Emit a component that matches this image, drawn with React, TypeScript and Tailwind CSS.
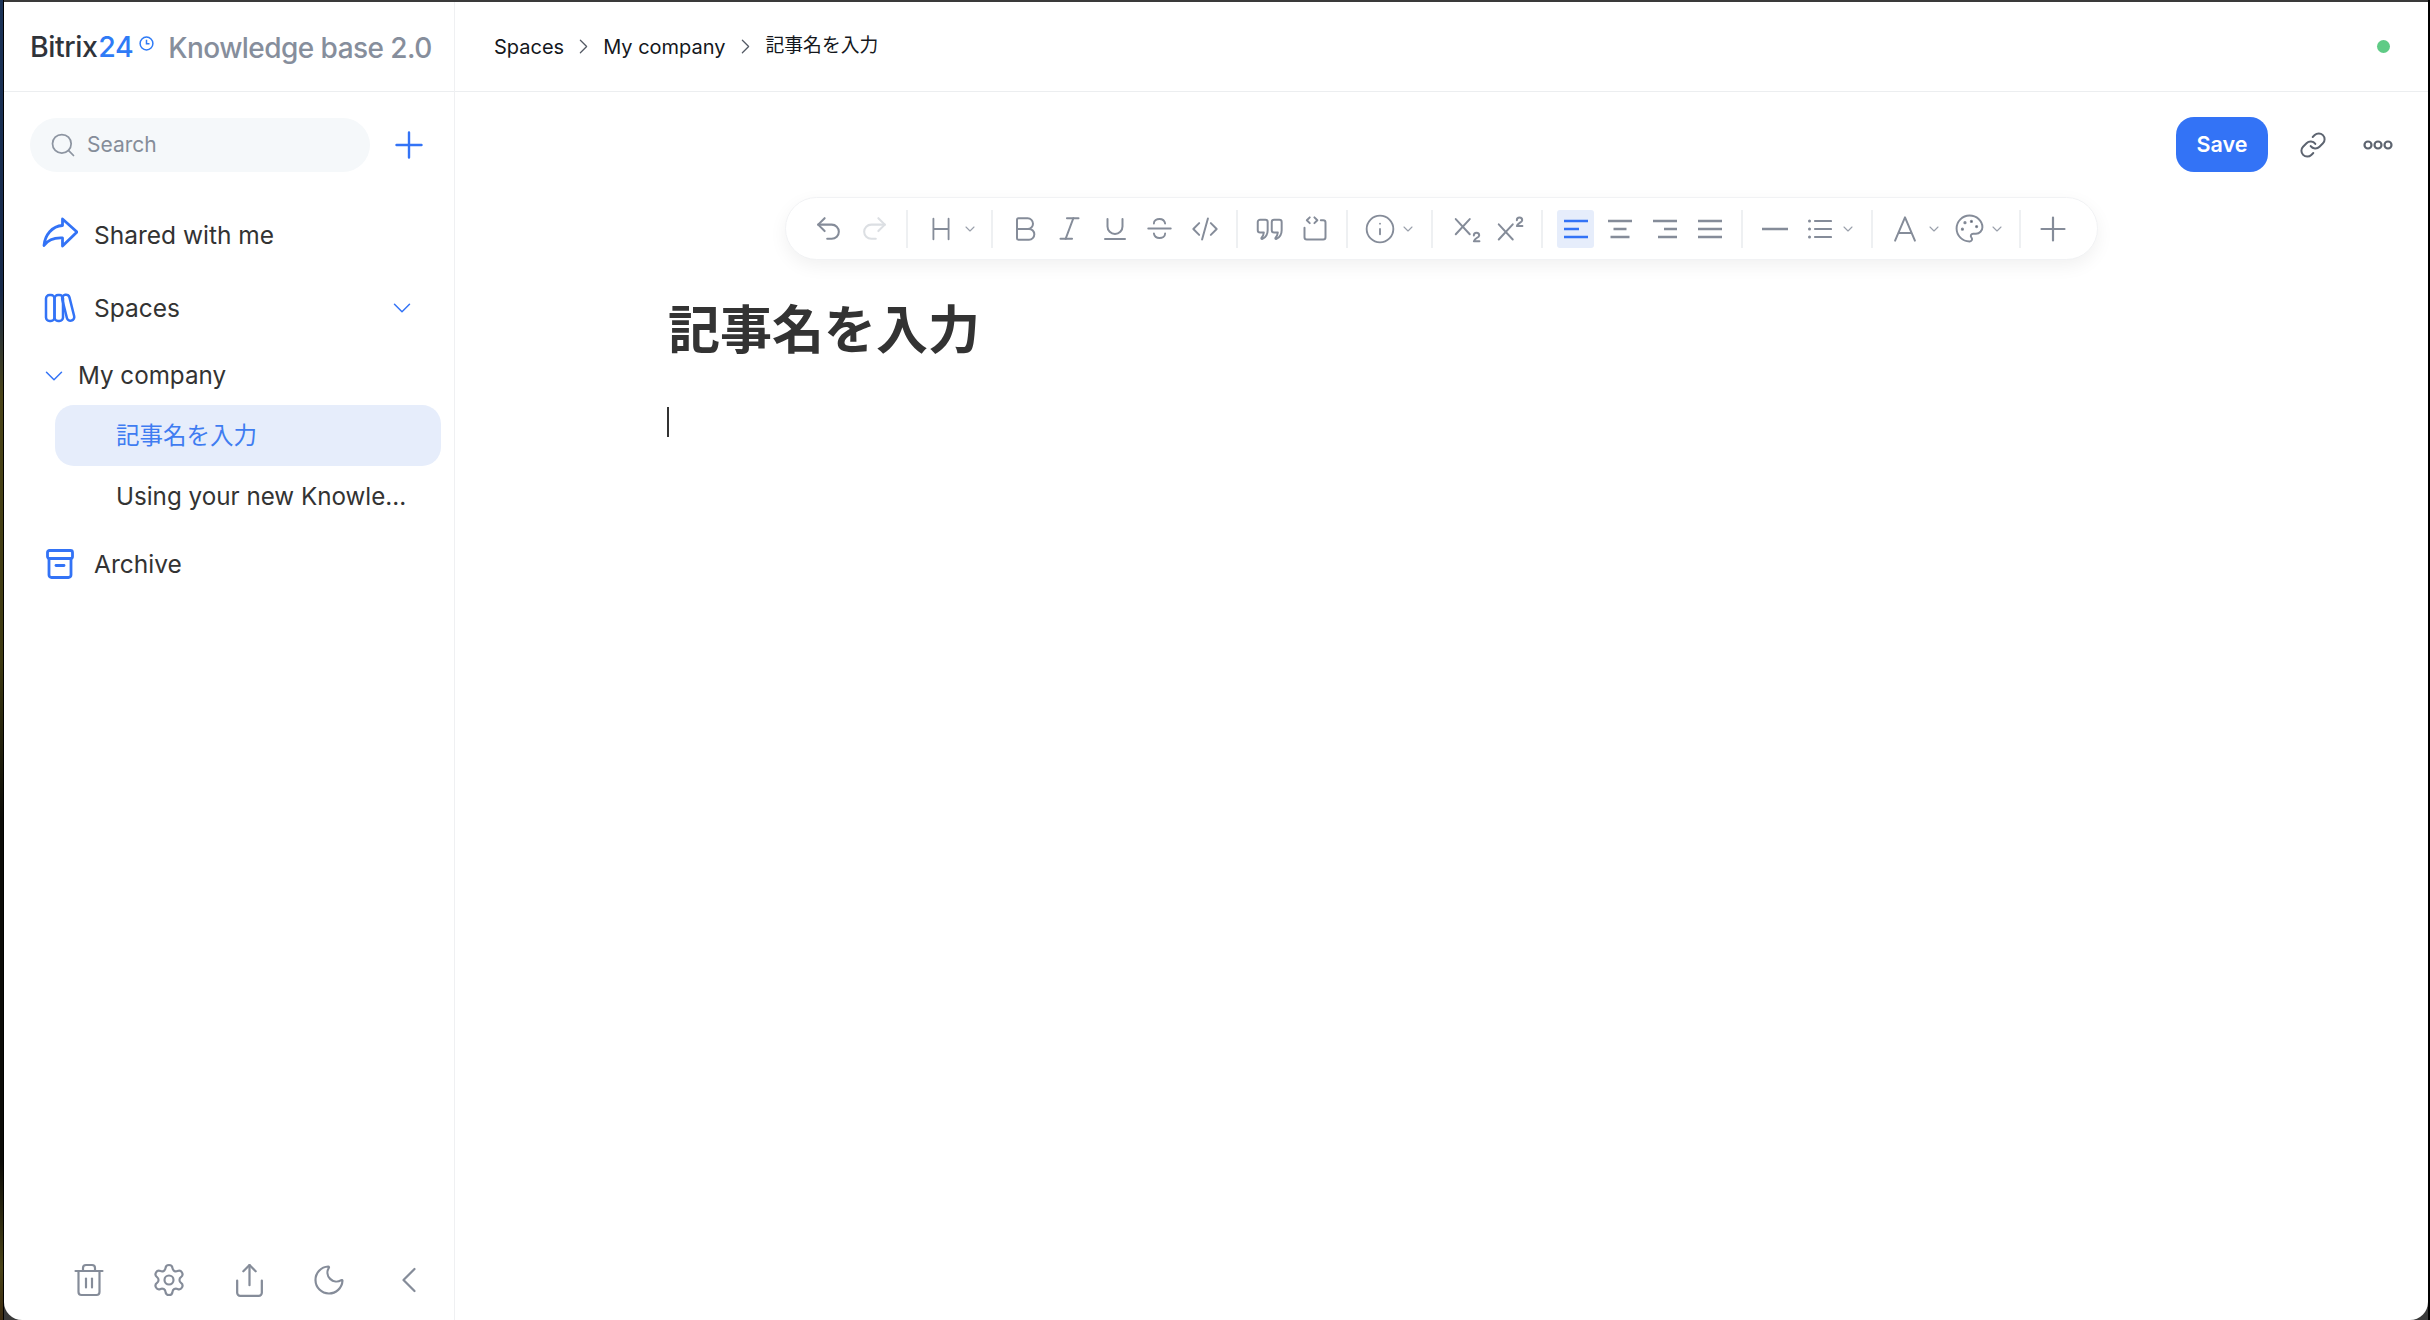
import React from "react";
import { Undo2, Redo2, Bold, Italic, Underline, Info, Palette, Link, Search, Trash2, Settings, Share, Moon, ChevronLeft, ChevronRight, ChevronDown } from "lucide-react";

const G = "#858c99";

function Svg({ size = 26, children }: { size?: number; children: React.ReactNode }) {
  return (
    <svg width={size} height={size} viewBox="0 0 24 24" fill="none" stroke={G} strokeWidth={1.7} strokeLinecap="round" strokeLinejoin="round">
      {children}
    </svg>
  );
}

function Btn({ w, children }: { w: string; children: React.ReactNode }) {
  return <div className={`${w} h-[38px] flex items-center justify-center shrink-0`}>{children}</div>;
}

function Sep() {
  return (
    <div className="w-[20px] h-[38px] flex justify-center shrink-0">
      <div className="w-[2px] h-full bg-[#eef0f2]" />
    </div>
  );
}

function Chev({ w }: { w: string }) {
  return (
    <div className={`${w} h-[38px] flex items-center shrink-0`}>
      <svg width="10" height="6" viewBox="0 0 10 6" fill="none" stroke="#9aa0ab" strokeWidth="1.1" strokeLinecap="round" strokeLinejoin="round">
        <path d="M1 1l4 4 4-4" />
      </svg>
    </div>
  );
}

function AlignIcon({ mid, bottom, color, align }: { mid: number; bottom: number; color: string; align: "l" | "c" | "r" }) {
  const line = (y: number, len: number) => {
    const x = align === "l" ? 0 : align === "r" ? 24 - len : (24 - len) / 2;
    return <line x1={x} x2={x + len} y1={y} y2={y} />;
  };
  return (
    <svg width="24" height="20" viewBox="0 0 24 20" fill="none" stroke={color} strokeWidth="2.4">
      {line(2, 24)}
      {line(10, mid)}
      {line(18, bottom)}
    </svg>
  );
}

function Toolbar() {
  return (
    <div className="flex items-center h-[63px] w-[1313px] pl-[19px] pr-[20px] rounded-[32px] bg-white border border-[#f1f2f4] shadow-[0_6px_18px_rgba(0,0,0,0.06)]">
      <Btn w="w-[47px]"><Undo2 size={31} color={G} strokeWidth={1.6} /></Btn>
      <Btn w="w-[45px]"><Redo2 size={31} color="#dcdfe3" strokeWidth={1.6} /></Btn>
      <Sep />
      <Btn w="w-[48px]">
        <Svg><path d="M5 2.500v19M19 2.500v19M5 12h14" /></Svg>
      </Btn>
      <Chev w="w-[17px]" />
      <Sep />
      <Btn w="w-[45px]"><Bold size={32} color={G} strokeWidth={1.5} /></Btn>
      <Btn w="w-[45px]"><Italic size={31} color={G} strokeWidth={1.5} /></Btn>
      <Btn w="w-[45px]"><Underline size={30} color={G} strokeWidth={1.6} /></Btn>
      <Btn w="w-[45px]">
        <Svg size={27}><path d="M2 12h20M17 7.500C16.500 5 14.500 3.500 12 3.500S7 5 7 7.500M7 16.500c.5 2.500 2.500 4 5 4s5-1.500 5-4" /></Svg>
      </Btn>
      <Btn w="w-[45px]">
        <Svg size={28}><path d="M7 7l-5 5 5 5M17 7l5 5-5 5M14.500 3l-5 18" /></Svg>
      </Btn>
      <Sep />
      <Btn w="w-[45px]">
        <Svg size={28}>
          <path d="M3.500 4h4.500a2 2 0 0 1 2 2v7c0 3.500-1.500 6-4.500 7.500-.8.300-1.200-.5-.7-1 1-1 1.700-2.500 1.900-4.500H3.500a2 2 0 0 1-2-2V6a2 2 0 0 1 2-2z" />
          <path d="M15.500 4h4.500a2 2 0 0 1 2 2v7c0 3.500-1.500 6-4.500 7.500-.8.300-1.200-.5-.7-1 1-1 1.700-2.500 1.900-4.500h-3.200a2 2 0 0 1-2-2V6a2 2 0 0 1 2-2z" />
        </Svg>
      </Btn>
      <Btn w="w-[45px]">
        <Svg size={28}>
          <path d="M3 11v8a2 2 0 0 0 2 2h14a2 2 0 0 0 2-2V6.500a2 2 0 0 0-2-2h-2" />
          <path d="M7.500 2 5 4.500 7.500 7M11.500 2 14 4.500 11.500 7" />
        </Svg>
      </Btn>
      <Sep />
      <Btn w="w-[46px]"><Info size={32} color={G} strokeWidth={1.4} /></Btn>
      <Chev w="w-[19px]" />
      <Sep />
      <div className="w-[3px] shrink-0" />
      <Btn w="w-[45px]">
        <Svg size={28}>
          <path d="M1.500 3.500l12 13M13.500 3.500l-12 13" />
          <path d="M17 17.500a2.300 2.300 0 0 1 4.600 0c0 1.800-4.600 2.800-4.600 5h4.800" />
        </Svg>
      </Btn>
      <Btn w="w-[42px]">
        <Svg size={28}>
          <path d="M1.500 8l12 13M13.500 8l-12 13" />
          <path d="M17 4.500a2.300 2.300 0 0 1 4.600 0c0 1.800-4.600 2.800-4.600 5h4.800" />
        </Svg>
      </Btn>
      <Sep />
      <div className="ml-[5px] mr-[3px] w-[37px] h-[38px] rounded-[3px] bg-[#e6edfb] flex items-center justify-center shrink-0">
        <AlignIcon mid={15} bottom={24} color="#3373f6" align="l" />
      </div>
      <Btn w="w-[45px]"><AlignIcon mid={13} bottom={19} color={G} align="c" /></Btn>
      <Btn w="w-[45px]"><AlignIcon mid={13} bottom={19} color={G} align="r" /></Btn>
      <Btn w="w-[45px]"><AlignIcon mid={24} bottom={24} color={G} align="l" /></Btn>
      <Sep />
      <Btn w="w-[45px]">
        <svg width="26" height="4" viewBox="0 0 26 4" stroke={G} strokeWidth="2.4"><line x1="0" x2="26" y1="2" y2="2" /></svg>
      </Btn>
      <Btn w="w-[46px]">
        <svg width="24" height="20" viewBox="0 0 24 20" fill="none" stroke={G} strokeWidth="2.200" strokeLinecap="round">
          <path d="M7 2h16M7 10h16M7 18h16" />
          <path d="M1.500 2h.01M1.500 10h.01M1.500 18h.01" strokeWidth="3" />
        </svg>
      </Btn>
      <Chev w="w-[19px]" />
      <Sep />
      <Btn w="w-[46px]">
        <Svg size={28}><path d="M3.500 22 12 2l8.500 20M6.500 15.500h11" /></Svg>
      </Btn>
      <Chev w="w-[19px] pl-px" />
      <Btn w="w-[44px]"><Palette size={31} color={G} strokeWidth={1.5} /></Btn>
      <Chev w="w-[19px] pl-px" />
      <Sep />
      <Btn w="w-[46px]">
        <svg width="26" height="26" viewBox="0 0 26 26" fill="none" stroke={G} strokeWidth="2.200" strokeLinecap="round">
          <path d="M13 1.500v23M1.500 13h23" />
        </svg>
      </Btn>
    </div>
  );
}

function NavRow({ h, mt, icon, label, trail }: { h: string; mt: string; icon: React.ReactNode; label: string; trail?: React.ReactNode }) {
  return (
    <div className={`flex items-center ${h} ${mt}`}>
      <div className="w-[64px] shrink-0 flex items-center">{icon}</div>
      <span className="text-[24.5px] text-[#333] leading-none">{label}</span>
      {trail}
    </div>
  );
}

function Sidebar() {
  return (
    <aside className="w-[451px] shrink-0 h-full flex flex-col border-r border-[#eff0f2]">
      <div className="h-[90px] border-b border-[#eceef0] flex items-center pl-[26px] pt-[2px] shrink-0">
        <span className="text-[28.5px] text-[#2f333a] font-medium tracking-[-0.45px]">Bitrix</span>
        <span className="text-[28.5px] text-[#2f7bf6] font-medium tracking-[-0.45px] ml-px">24</span>
        <svg className="ml-[6px] mb-[9px]" width="15" height="15" viewBox="0 0 15 15" fill="none" stroke="#2f7bf6" strokeWidth="1.500">
          <circle cx="7.500" cy="7.500" r="6.400" />
          <path d="M7.500 3.800v4h3" />
        </svg>
        <span className="ml-[14px] text-[28px] text-[#868e9c] font-medium tracking-[-0.55px] whitespace-nowrap">Knowledge base 2.0</span>
      </div>
      <div className="flex-1 flex flex-col pl-[26px] pr-[13px] pt-[26px]">
        <div className="flex items-center">
          <div className="w-[340px] h-[54px] rounded-[27px] bg-[#f5f8fa] flex items-center pl-[19px]">
            <Search size={28} color="#8d95a1" strokeWidth={1.5} />
            <span className="ml-[10px] text-[21px] text-[#858d99]">Search</span>
          </div>
          <div className="ml-[25px]">
            <svg width="28" height="28" viewBox="0 0 28 28" fill="none" stroke="#3373f6" strokeWidth="2.400" strokeLinecap="round">
              <path d="M14 1.500v25M1.500 14h25" />
            </svg>
          </div>
        </div>
        <NavRow
          h="h-[54px]"
          mt="mt-[36px]"
          label="Shared with me"
          icon={
            <svg className="ml-[10px] -translate-y-[3px]" width="38" height="32" viewBox="0 0 38 32" fill="none" stroke="#3373f6" strokeWidth="2.800" strokeLinejoin="round" strokeLinecap="round">
              <path d="M22.500 3 L37 16 L22.500 30 L22.500 22 C14 21.500 8 24 4 29.500 C5 19 12 10 22.500 9.500 Z" />
            </svg>
          }
        />
        <NavRow
          h="h-[54px]"
          mt="mt-[19px]"
          label="Spaces"
          icon={
            <svg className="ml-[14px]" width="34" height="30" viewBox="0 0 34 30" fill="none" stroke="#3373f6" strokeWidth="2.500">
              <rect x="2" y="2" width="8.500" height="26" rx="3.500" />
              <rect x="10.500" y="2" width="8.500" height="26" rx="3.500" />
              <rect x="20.500" y="1.500" width="7.500" height="26.500" rx="3.500" transform="rotate(-14 24 15)" />
            </svg>
          }
          trail={
            <div className="ml-auto mr-[24px]">
              <ChevronDown size={30} color="#3373f6" strokeWidth={1.2} />
            </div>
          }
        />
        <div className="flex items-center h-[50px] mt-[16px] pl-[9px]">
          <ChevronDown size={30} color="#3373f6" strokeWidth={1.2} />
          <span className="ml-[9px] text-[24.2px] text-[#333] leading-none">My company</span>
        </div>
        <div className="ml-[25px] mt-[4px] h-[61px] rounded-[19px] bg-[#e6edfb] flex items-center pl-[61px] text-[23.5px] text-[#3f7cf1]">
          記事名を入力
        </div>
        <div className="ml-[86px] h-[60px] mt-px flex items-center text-[24.2px] text-[#333] whitespace-nowrap">Using your new Knowle...</div>
        <NavRow
          h="h-[54px]"
          mt="mt-[10px]"
          label="Archive"
          icon={
            <svg className="ml-[16px]" width="28" height="30" viewBox="0 0 28 30" fill="none" stroke="#3373f6" strokeWidth="2.800" strokeLinejoin="round" strokeLinecap="round">
              <rect x="1.500" y="1.500" width="25" height="8" rx="2" />
              <path d="M3 9.500V26a2.500 2.500 0 0 0 2.500 2.500h17A2.500 2.500 0 0 0 25 26V9.500" />
              <path d="M10 16.500h8" />
            </svg>
          }
        />
        <div className="mt-auto pb-[20px] flex items-center ml-[19px]">
          {[
            <Trash2 size={36} color={G} strokeWidth={1.45} />,
            <Settings size={36} color={G} strokeWidth={1.45} />,
            <Share size={37} color={G} strokeWidth={1.45} />,
            <Moon size={36} color={G} strokeWidth={1.45} />,
            <ChevronLeft size={44} color={G} strokeWidth={1.2} />,
          ].map((ic, i) => (
            <div key={i} className="w-[80px] h-[40px] shrink-0 flex items-center justify-center">{ic}</div>
          ))}
        </div>
      </div>
    </aside>
  );
}

function Main() {
  return (
    <main className="flex-1 min-w-0 h-full flex flex-col">
      <header className="h-[90px] border-b border-[#eceef0] flex items-center pl-[39px] pr-[38px] shrink-0 text-[20px] text-[#14171c]">
        <span>Spaces</span>
        <ChevronRight size={25} color="#555b66" strokeWidth={1.2} className="mx-[7px]" />
        <span>My company</span>
        <ChevronRight size={25} color="#555b66" strokeWidth={1.2} className="ml-[7px] mr-[8px]" />
        <span className="text-[18.8px]">記事名を入力</span>
        <div className="ml-auto w-[13px] h-[13px] rounded-full bg-[#5fcb85]" />
      </header>
      <div className="flex items-center justify-end mt-[25px] pr-[35px]">
        <button className="w-[92px] h-[55px] rounded-[18px] bg-[#3373f6] text-white text-[21.5px] font-semibold">Save</button>
        <Link size={28} color="#5d6470" strokeWidth={1.7} className="ml-[31px]" />
        <svg className="ml-[36px]" width="30" height="12" viewBox="0 0 30 12" fill="none" stroke="#5d6470" strokeWidth="2.200">
          <circle cx="5" cy="6" r="3.500" />
          <circle cx="15" cy="6" r="3.500" />
          <circle cx="25" cy="6" r="3.500" />
        </svg>
      </div>
      <div className="flex justify-center mt-[25px]">
        <Toolbar />
      </div>
      <div className="pl-[213px] mt-[36px]">
        <h1 className="text-[52px] leading-[70px] font-bold text-[#333]">記事名を入力</h1>
        <div className="w-[2px] h-[30px] bg-[#333] mt-[41px] -ml-px" />
      </div>
    </main>
  );
}

export default function App() {
  return (
    <div className="w-[2430px] h-[1320px] overflow-hidden flex bg-[linear-gradient(to_bottom,#1b3358_0%,#16294a_22%,#4a4418_30%,#3e3a12_50%,#0c0c08_62%,#0c0c08_88%,#4a4418_96%,#3b2a10_100%)] font-['Inter','Noto_Sans_CJK_JP',sans-serif]">
      <div className="w-[3px] shrink-0" />
      <div className="flex-1 min-w-0 pt-[2px] bg-[#3a3a3a] border-l border-black">
        <div className="h-full bg-white rounded-b-[18px] flex overflow-hidden">
          <Sidebar />
          <Main />
        </div>
      </div>
      <div className="w-[2px] shrink-0 bg-black" />
    </div>
  );
}
